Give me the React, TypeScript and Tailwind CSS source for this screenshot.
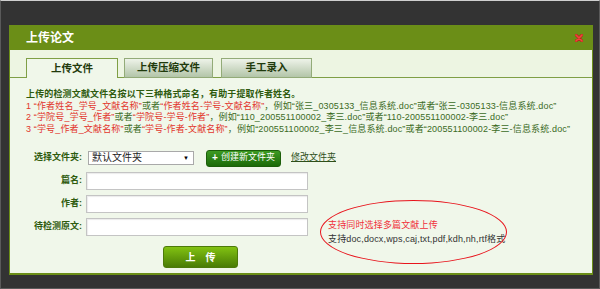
import React from 'react';

const font = "font-['Liberation_Sans','Noto_Sans_CJK_SC',sans-serif]";

function Red({ children }: { children: React.ReactNode }) {
    return <span className="text-[#e2352c]">{children}</span>;
}

function Tab({ label, active, className }: { label: string; active?: boolean; className?: string }) {
    const look = active
        ? 'border border-b-0 border-[#7f9f45] bg-[#f0f7ea] h-[20px]'
        : 'border border-[#93ab78] bg-gradient-to-b from-[#eef3e9] to-[#b3c5a9] h-[20px]';
    return (
        <div className={`-mb-px flex items-center justify-center text-[10.5px] font-bold text-[#1f3a0c] ${look} ${className ?? ''}`}>
            {label}
        </div>
    );
}

function Field({ label, children }: { label: string; children?: React.ReactNode }) {
    return (
        <div className="flex h-[18px] items-center">
            <div className="w-[56px] text-right text-[9px] font-bold text-[#2e5b0e]">{label}:</div>
            <div className="ml-[4px] h-[18px] w-[222px] border border-[#c4c4c4] bg-white shadow-[inset_1px_1px_1px_rgba(0,0,0,0.08)]" />
            {children}
        </div>
    );
}

export default function App() {
    return (
        <div className={`h-[289px] w-[600px] overflow-hidden border border-t-[#cfcfcf] border-x-[#5a5a5a] border-b-[#5a5a5a] bg-[#333333] ${font}`}>
            <div className="ml-[8px] mt-[24px] w-[584px]">
                {/* title bar */}
                <div className="flex h-[25px] items-center justify-between bg-[#6b8e17] pl-[17px] pr-[10px]">
                    <span className="text-[12px] font-bold text-white">上传论文</span>
                    <svg width="8" height="8" viewBox="0 0 8 8">
                        <path d="M1 1 L7 7 M7 1 L1 7" stroke="#b52a1c" strokeWidth="3" strokeLinecap="round" />
                        <path d="M1 1 L7 7 M7 1 L1 7" stroke="#f0463a" strokeWidth="1.6" strokeLinecap="round" />
                    </svg>
                </div>

                <div className="border-x border-b-2 border-[#6b8e17]">
                    {/* tabs */}
                    <div className="flex h-[28px] items-end border-b border-[#7f9f45] bg-[#edf5e2] pl-[16px]">
                        <Tab label="上传文件" active className="w-[92px]" />
                        <Tab label="上传压缩文件" className="ml-[6px] w-[89px]" />
                        <Tab label="手工录入" className="ml-[8px] w-[91px]" />
                    </div>

                    {/* content */}
                    <div className="h-[195px] bg-[#f0f7ea] pl-[16px] pt-[11px]">
                        <div className="whitespace-nowrap text-[9px] leading-[11.5px] tracking-[0.15px] text-[#3b6b1f]">
                            <div className="font-bold text-[#2e5b0e]">上传的检测文献文件名按以下三种格式命名，有助于提取作者姓名。</div>
                            <div>
                                <Red>1 “作者姓名_学号_文献名称”</Red>或者<Red>“作者姓名-学号-文献名称”</Red>，例如“张三_0305133_信息系统.doc”或者“张三-0305133-信息系统.doc”
                            </div>
                            <div>
                                <Red>2 “学院号_学号_作者”</Red>或者<Red>“学院号-学号-作者”</Red>，例如“110_200551100002_李三.doc”或者“110-200551100002-李三.doc”
                            </div>
                            <div>
                                <Red>3 “学号_作者_文献名称”</Red>或者<Red>“学号-作者-文献名称”</Red>，例如“200551100002_李三_信息系统.doc”或者“200551100002-李三-信息系统.doc”
                            </div>
                        </div>

                        <div className="mt-[14px] flex flex-col gap-[5px]">
                            <div className="flex h-[18px] items-center">
                                <div className="w-[56px] text-right text-[9px] font-bold text-[#2e5b0e]">选择文件夹:</div>
                                <div className="ml-[6px] flex h-[14px] w-[106px] items-center justify-between border border-[#a9a9a9] bg-white pl-[3px] pr-[4px]">
                                    <span className="text-[10px] leading-none text-[#222]">默认文件夹</span>
                                    <span className="text-[6px] leading-none text-black">▼</span>
                                </div>
                                <button className="ml-[12px] flex h-[17px] w-[75px] items-center justify-center gap-[3px] rounded-[3px] border border-[#1c5e0a] bg-gradient-to-b from-[#3d9a22] to-[#1b6a08] text-[9px] text-white">
                                    <span className="text-[10px] font-bold leading-none">+</span>
                                    <span>创建新文件夹</span>
                                </button>
                                <span className="ml-[10px] text-[9px] text-[#2e4f1a] underline">修改文件夹</span>
                            </div>

                            <Field label="篇名" />
                            <Field label="作者" />
                            <Field label="待检测原文">
                                <div className="relative ml-[20px] self-start whitespace-nowrap text-[9px] leading-[14px] tracking-[0.15px]">
                                    <div className="absolute left-[-8px] top-[-18px] h-[64px] w-[187px] rounded-[50%] border-[1.5px] border-[#e8141c]" />
                                    <div className="text-[#f0303a]">支持同时选择多篇文献上传</div>
                                    <div className="text-[#333]">支持doc,docx,wps,caj,txt,pdf,kdh,nh,rtf格式</div>
                                </div>
                            </Field>
                        </div>

                        <button className="ml-[137px] mt-[10px] flex h-[22px] w-[75px] items-center justify-center rounded-[3px] border border-[#4d7a0a] bg-gradient-to-b from-[#82c212] to-[#4a7c06] text-[10px] font-bold text-white">
                            上　传
                        </button>
                    </div>
                </div>
            </div>
        </div>
    );
}
